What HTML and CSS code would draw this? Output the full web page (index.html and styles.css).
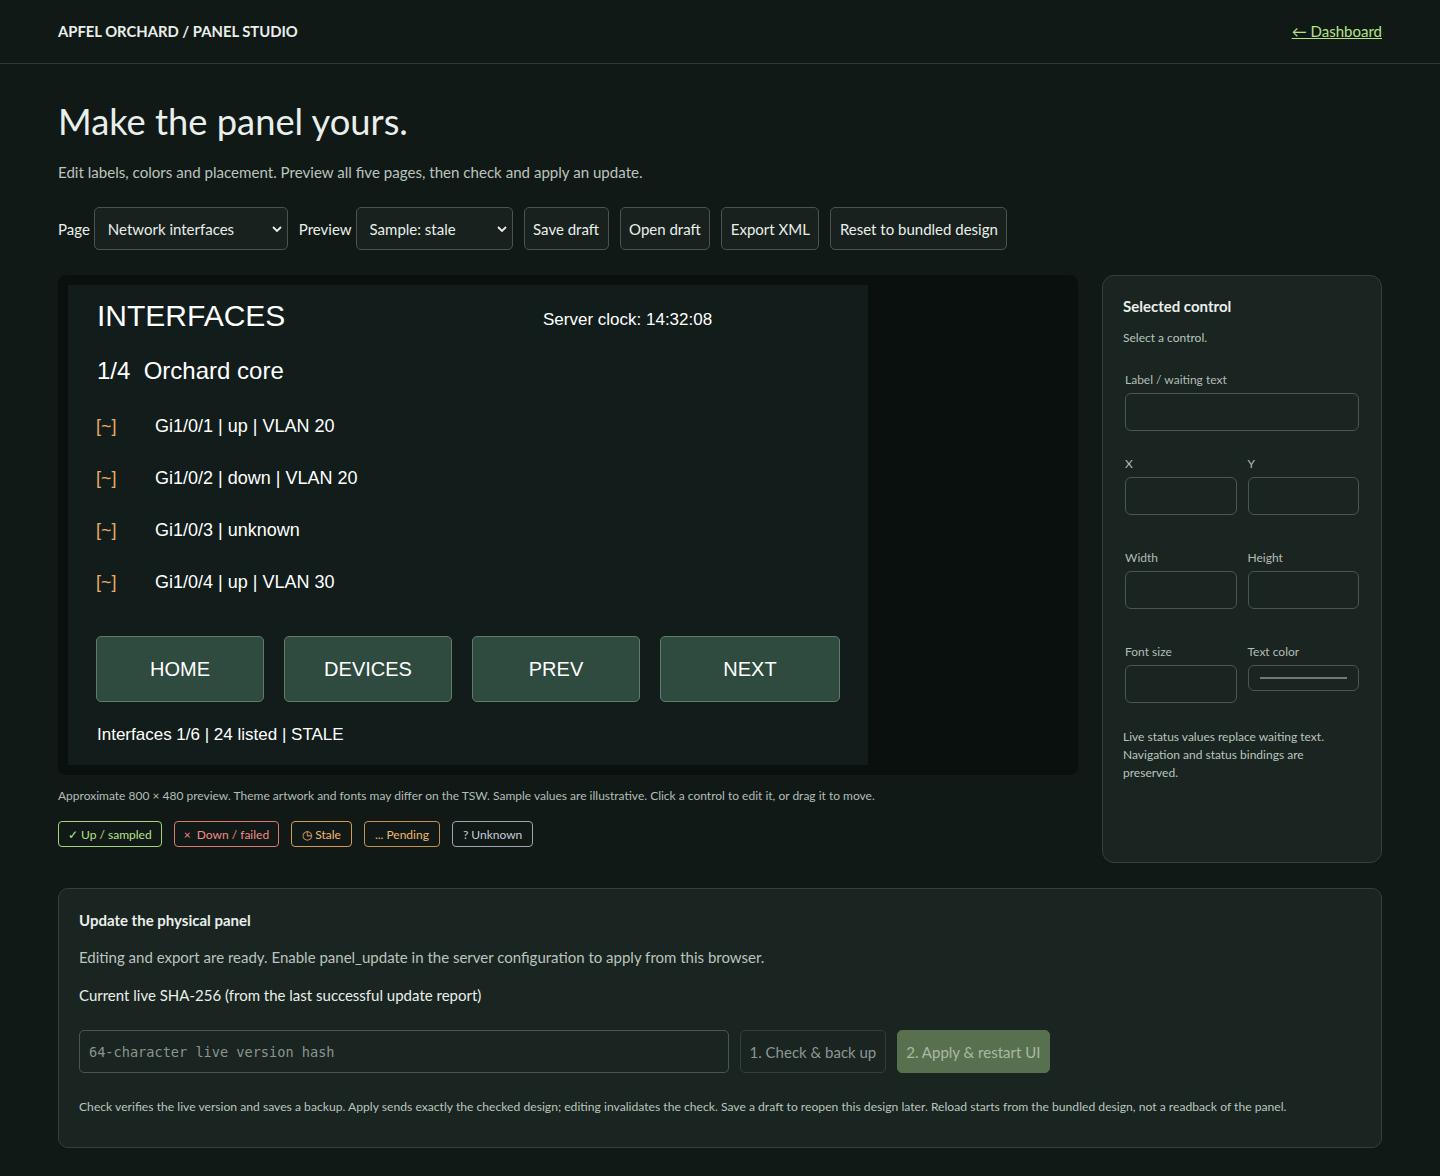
FILE: index.html
```html
<!DOCTYPE html>
<html lang="en">
<head>
    <meta charset="UTF-8">
    <meta name="viewport" content="width=device-width, initial-scale=1.0">
    <title>Panel Studio</title>
    <link rel="stylesheet" href="styles.css">
</head>
<body>

<header class="topbar">
    <div class="brand">APFEL ORCHARD / PANEL STUDIO</div>
    <a class="back-link" href="#">&larr; Dashboard</a>
</header>

<main class="page">
    <h1>Make the panel yours.</h1>
    <p class="lead">Edit labels, colors and placement. Preview all five pages, then check and apply an update.</p>

    <!-- Toolbar -->
    <div class="toolbar">
        <label for="pageSelect">Page</label>
        <select id="pageSelect" class="select select-page">
            <option>Network interfaces</option>
        </select>
        <label for="previewSelect">Preview</label>
        <select id="previewSelect" class="select select-preview">
            <option>Sample: stale</option>
        </select>
        <button class="btn">Save draft</button>
        <button class="btn">Open draft</button>
        <button class="btn">Export XML</button>
        <button class="btn">Reset to bundled design</button>
    </div>

    <div class="workspace">
        <div class="preview-col">
            <div class="stage">
                <!-- 800 x 480 panel canvas -->
                <div class="panel-canvas">
                    <div class="pc-title">INTERFACES</div>
                    <div class="pc-clock">Server clock: 14:32:08</div>
                    <div class="pc-sub">1/4&nbsp;&nbsp;Orchard core</div>

                    <div class="pc-row" style="top: 132px"><span class="pc-mark">[~]</span><span>Gi1/0/1 | up | VLAN 20</span></div>
                    <div class="pc-row" style="top: 184px"><span class="pc-mark">[~]</span><span>Gi1/0/2 | down | VLAN 20</span></div>
                    <div class="pc-row" style="top: 236px"><span class="pc-mark">[~]</span><span>Gi1/0/3 | unknown</span></div>
                    <div class="pc-row" style="top: 288px"><span class="pc-mark">[~]</span><span>Gi1/0/4 | up | VLAN 30</span></div>

                    <div class="pc-btn" style="left: 28px">HOME</div>
                    <div class="pc-btn" style="left: 216px">DEVICES</div>
                    <div class="pc-btn" style="left: 404px">PREV</div>
                    <div class="pc-btn pc-btn-wide" style="left: 592px">NEXT</div>

                    <div class="pc-footer">Interfaces 1/6 | 24 listed | STALE</div>
                </div>
            </div>
            <p class="caption">Approximate 800 &times; 480 preview. Theme artwork and fonts may differ on the TSW. Sample values are illustrative. Click a control to edit it, or drag it to move.</p>
            <div class="legend">
                <span class="chip chip-up">&#10003; Up / sampled</span>
                <span class="chip chip-down">&times;&nbsp; Down / failed</span>
                <span class="chip chip-stale">&#9719; Stale</span>
                <span class="chip chip-pending">... Pending</span>
                <span class="chip chip-unknown">? Unknown</span>
            </div>
        </div>

        <!-- Selected control inspector -->
        <aside class="inspector">
            <h2>Selected control</h2>
            <p class="hint">Select a control.</p>

            <div class="field field-first">
                <label>Label / waiting text</label>
                <input type="text" class="input">
            </div>

            <div class="field-pair">
                <div class="field">
                    <label>X</label>
                    <input type="text" class="input">
                </div>
                <div class="field">
                    <label>Y</label>
                    <input type="text" class="input">
                </div>
            </div>

            <div class="field-pair">
                <div class="field">
                    <label>Width</label>
                    <input type="text" class="input">
                </div>
                <div class="field">
                    <label>Height</label>
                    <input type="text" class="input">
                </div>
            </div>

            <div class="field-pair">
                <div class="field">
                    <label>Font size</label>
                    <input type="text" class="input">
                </div>
                <div class="field">
                    <label>Text color</label>
                    <div class="color-input"><span class="color-swatch"></span></div>
                </div>
            </div>

            <p class="note">Live status values replace waiting text. Navigation and status bindings are preserved.</p>
        </aside>
    </div>

    <!-- Update section -->
    <section class="update">
        <h2>Update the physical panel</h2>
        <p class="update-text">Editing and export are ready. Enable panel_update in the server configuration to apply from this browser.</p>
        <p class="update-label">Current live SHA-256 (from the last successful update report)</p>
        <div class="update-row">
            <input type="text" class="hash-input" placeholder="64-character live version hash">
            <button class="btn btn-disabled">1. Check &amp; back up</button>
            <button class="btn btn-apply">2. Apply &amp; restart UI</button>
        </div>
        <p class="footnote">Check verifies the live version and saves a backup. Apply sends exactly the checked design; editing invalidates the check. Save a draft to reopen this design later. Reload starts from the bundled design, not a readback of the panel.</p>
    </section>
</main>

</body>
</html>
```

FILE: styles.css
```css
body {
    margin: 0;
    background-color: #111917;
    color: #e9efea;
    font-family: Lato, "Noto Sans", sans-serif;
}

/* Header */
.topbar {
    box-sizing: border-box;
    height: 64px;
    border-bottom: 1px solid #2f3a35;
    display: flex;
    align-items: center;
    justify-content: space-between;
    padding: 0 58px 2px;
}
.brand {
    font-size: 14.8px;
    font-weight: 700;
}
.back-link {
    color: #b6e28a;
    font-size: 15px;
}

.page {
    padding: 34px 58px 28px;
}
h1 {
    font-size: 36.3px;
    font-weight: 400;
    line-height: 46px;
    margin: 0;
}
.lead {
    font-size: 15.1px;
    line-height: 22px;
    color: #b9c4bd;
    margin: 17px 0 24px;
}

/* Toolbar */
.toolbar {
    display: flex;
    align-items: center;
    gap: 11px;
}
.toolbar label {
    font-size: 15px;
    margin-right: -7px;
}
.select {
    appearance: none;
    height: 43px;
    background-color: #18211e;
    background-image: url("data:image/svg+xml,%3Csvg xmlns='http://www.w3.org/2000/svg' width='10' height='6' viewBox='0 0 10 6'%3E%3Cpath d='M1 1l4 4 4-4' fill='none' stroke='%23e9efea' stroke-width='1.8'/%3E%3C/svg%3E");
    background-repeat: no-repeat;
    background-position: right 5px center;
    border: 1px solid #48544e;
    border-radius: 5px;
    color: #e9efea;
    font-family: inherit;
    font-size: 15px;
    padding: 0 13px;
}
.select-page { width: 194px; }
.select-preview { width: 157px; }
.btn {
    height: 43px;
    background-color: #18211e;
    border: 1px solid #48544e;
    border-radius: 5px;
    color: #e9efea;
    font-family: inherit;
    font-size: 15px;
    padding: 0 8.5px;
}

/* Workspace */
.workspace {
    display: grid;
    grid-template-columns: 1fr 280px;
    gap: 24px;
    margin-top: 25px;
}
.preview-col {
    padding-bottom: 16px;
}
.stage {
    background-color: #0a100e;
    border-radius: 8px;
    padding: 10px;
}
.panel-canvas {
    position: relative;
    width: 800px;
    height: 480px;
    background-color: #121c1a;
    font-family: "Liberation Sans", Arial, sans-serif;
    color: #ffffff;
}
.pc-title {
    position: absolute;
    left: 29px;
    top: 16px;
    font-size: 30px;
    line-height: 30px;
}
.pc-clock {
    position: absolute;
    left: 475px;
    top: 26px;
    font-size: 17px;
    line-height: 17px;
}
.pc-sub {
    position: absolute;
    left: 29px;
    top: 74px;
    font-size: 24px;
    line-height: 24px;
}
.pc-row {
    position: absolute;
    left: 28px;
    font-size: 18px;
    line-height: 18px;
    display: flex;
}
.pc-mark {
    color: #e8aa66;
    width: 59px;
}
.pc-btn {
    position: absolute;
    top: 351px;
    width: 166px;
    height: 64px;
    background-color: #2f4a3e;
    border: 1px solid #5e7d6b;
    border-radius: 5px;
    display: flex;
    align-items: center;
    justify-content: center;
    font-size: 20px;
}
.pc-btn-wide {
    width: 178px;
}
.pc-footer {
    position: absolute;
    left: 29px;
    top: 441px;
    font-size: 17px;
    line-height: 17px;
}

.caption {
    font-size: 12px;
    line-height: 16px;
    color: #b2bdb6;
    margin: 13px 0 17px;
}
.legend {
    display: flex;
    gap: 12px;
}
.chip {
    height: 24px;
    display: inline-flex;
    align-items: center;
    padding: 0 10px;
    border: 1px solid;
    border-radius: 4px;
    font-size: 12px;
}
.chip-up { color: #b6e28a; border-color: #a6d27c; padding: 0 9px; }
.chip-down { color: #f08c82; border-color: #d9786f; padding: 0 9px; }
.chip-stale { color: #f0b870; border-color: #d49a55; }
.chip-pending { color: #f0b870; border-color: #c79050; }
.chip-unknown { color: #c3ccd6; border-color: #9aa5b0; }

/* Inspector */
.inspector {
    background-color: #1a2421;
    border: 1px solid #34403b;
    border-radius: 12px;
    padding: 20px 22px 20px 20px;
}
.inspector h2 {
    font-size: 15px;
    line-height: 20px;
    margin: 0;
}
.hint {
    font-size: 12px;
    line-height: 16px;
    color: #b9c4bd;
    margin: 14px 0 0;
}
.field label {
    display: block;
    font-size: 12px;
    line-height: 16px;
    color: #b2bdb6;
    margin: 0 0 5px;
}
.field-first {
    margin: 26px 0 0 2px;
}
.field-pair {
    display: grid;
    grid-template-columns: 1fr 1fr;
    gap: 11px;
    margin: 25px 0 0 2px;
}
.field-pair + .field-pair {
    margin-top: 35px;
}
.input {
    box-sizing: border-box;
    width: 100%;
    height: 38px;
    background-color: #1a2421;
    border: 1px solid #4a5650;
    border-radius: 6px;
}
.color-input {
    box-sizing: border-box;
    height: 26px;
    border: 1px solid #4a5650;
    border-radius: 6px;
    display: flex;
    align-items: center;
    padding: 0 11px;
}
.color-swatch {
    flex: 1;
    height: 2px;
    background-color: #777;
}
.note {
    font-size: 12px;
    line-height: 18px;
    color: #b9c4bd;
    margin: 25px 0 0;
}

/* Update section */
.update {
    background-color: #1a2421;
    border: 1px solid #34403b;
    border-radius: 10px;
    padding: 21px 20px 32px;
    margin-top: 25px;
}
.update h2 {
    font-size: 15px;
    line-height: 20px;
    margin: 0;
}
.update-text {
    font-size: 15px;
    line-height: 22px;
    color: #b9c4bd;
    margin: 16px 0 0;
}
.update-label {
    font-size: 15px;
    line-height: 22px;
    margin: 16px 0 0;
}
.update-row {
    display: flex;
    gap: 11px;
    margin-top: 24px;
}
.hash-input {
    box-sizing: border-box;
    width: 650px;
    height: 43px;
    background-color: #1a2421;
    border: 1px solid #4a5650;
    border-radius: 5px;
    padding: 0 9px;
    font-family: "DejaVu Sans Mono", monospace;
    font-size: 13.6px;
    color: #e9efea;
}
.hash-input::placeholder {
    color: #8b9590;
}
.btn-disabled {
    background-color: #1a2421;
    border-color: #333e39;
    color: #8d9792;
}
.btn-apply {
    background-color: #59704f;
    border-color: #59704f;
    color: #a9b9a2;
}
.footnote {
    font-size: 12.15px;
    line-height: 16px;
    color: #b9c4bd;
    margin: 26px 0 0;
}
```
